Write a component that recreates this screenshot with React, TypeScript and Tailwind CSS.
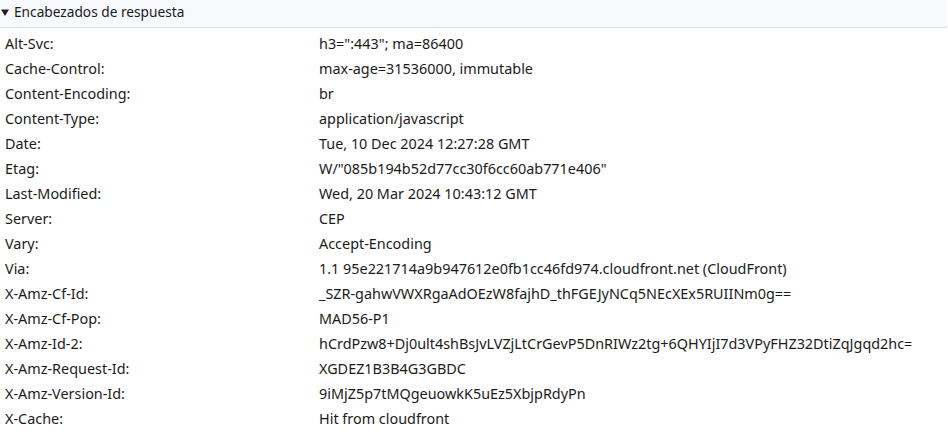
const headers: [string, string][] = [
  ['Alt-Svc', 'h3=":443"; ma=86400'],
  ['Cache-Control', 'max-age=31536000, immutable'],
  ['Content-Encoding', 'br'],
  ['Content-Type', 'application/javascript'],
  ['Date', 'Tue, 10 Dec 2024 12:27:28 GMT'],
  ['Etag', 'W/"085b194b52d77cc30f6cc60ab771e406"'],
  ['Last-Modified', 'Wed, 20 Mar 2024 10:43:12 GMT'],
  ['Server', 'CEP'],
  ['Vary', 'Accept-Encoding'],
  ['Via', '1.1 95e221714a9b947612e0fb1cc46fd974.cloudfront.net (CloudFront)'],
  ['X-Amz-Cf-Id', '_SZR-gahwVWXRgaAdOEzW8fajhD_thFGEJyNCq5NEcXEx5RUIINm0g=='],
  ['X-Amz-Cf-Pop', 'MAD56-P1'],
  ['X-Amz-Id-2', 'hCrdPzw8+Dj0ult4shBsJvLVZjLtCrGevP5DnRIWz2tg+6QHYIjI7d3VPyFHZ32DtiZqJgqd2hc='],
  ['X-Amz-Request-Id', 'XGDEZ1B3B4G3GBDC'],
  ['X-Amz-Version-Id', '9iMjZ5p7tMQgeuowkK5uEz5XbjpRdyPn'],
  ['X-Cache', 'Hit from cloudfront'],
]

export default function App() {
  return (
    <div
      className="w-[948px] h-[438px] bg-white text-[14.4px] text-[#1b1b1b] overflow-hidden"
      style={{ fontFamily: '"Noto Sans", sans-serif' }}
    >
      <div className="w-[947px] h-[28px] bg-[#f8f9fd] border-b border-[#d8dde9] flex items-center pl-[1px] pb-[2px] text-[13.7px]">
        {/* disclosure triangle */}
        <svg width="8" height="7" viewBox="0 0 8 7" className="mr-[5px]">
          <path d="M0 0.5h8L4 7z" fill="#1f1f1f" />
        </svg>
        <span>Encabezados de respuesta</span>
      </div>
      <div className="pt-[3px]">
        {headers.map(([name, value]) => (
          <div key={name} className="flex h-[25px] items-center">
            <div className="w-[319px] pl-[5px] shrink-0">{name}:</div>
            <div className="whitespace-nowrap">{value}</div>
          </div>
        ))}
      </div>
    </div>
  )
}
